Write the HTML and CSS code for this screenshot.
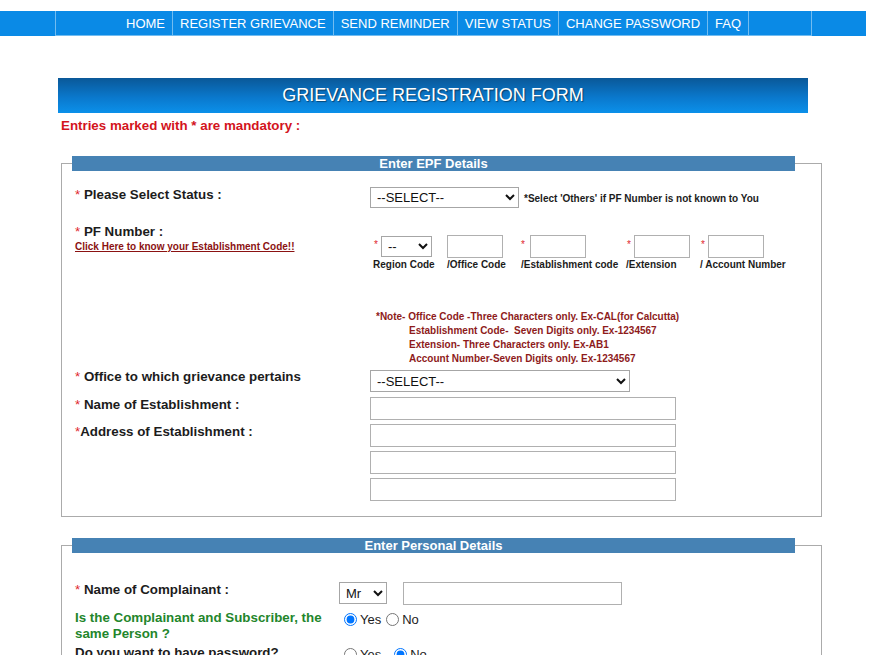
FILE: index.html
```html
<!DOCTYPE html>
<html lang="en">
<head>
<meta charset="utf-8">
<title>Grievance Registration Form</title>
<link rel="stylesheet" href="styles.css">
</head>
<body>
<div class="topbar">
  <ul class="menu">
    <li>HOME</li>
    <li>REGISTER GRIEVANCE</li>
    <li>SEND REMINDER</li>
    <li>VIEW STATUS</li>
    <li>CHANGE PASSWORD</li>
    <li>FAQ</li>
    <li class="empty"></li>
  </ul>
</div>

<div class="title">GRIEVANCE REGISTRATION FORM</div>
<p class="mandatory">Entries marked with * are mandatory :</p>

<fieldset class="fs fs-epf">
  <legend><span>Enter EPF Details</span></legend>

  <div class="row r-status">
    <div class="lbl"><span class="req">*</span> Please Select Status :</div>
    <div class="field">
      <select class="sel sel-status"><option>--SELECT--</option></select>
      <span class="hint">*Select 'Others' if PF Number is not known to You</span>
    </div>
  </div>

  <div class="row r-pf">
    <div class="lbl">
      <div><span class="req">*</span> PF Number :</div>
      <a class="estlink" href="#">Click Here to know your Establishment Code!!</a>
    </div>
    <div class="field">
      <div class="pf">
        <div class="pf-cell c1">
          <div class="pf-top"><span class="star">*</span><select class="sel sel-region"><option>--</option></select></div>
          <div class="pf-lbl">Region Code</div>
        </div>
        <div class="pf-cell c2">
          <div class="pf-top"><input class="txt txt-pf" type="text"></div>
          <div class="pf-lbl">/Office Code</div>
        </div>
        <div class="pf-cell c3">
          <div class="pf-top"><span class="star">*</span><input class="txt txt-pf" type="text"></div>
          <div class="pf-lbl">/Establishment code</div>
        </div>
        <div class="pf-cell c4">
          <div class="pf-top"><span class="star">*</span><input class="txt txt-pf" type="text"></div>
          <div class="pf-lbl">/Extension</div>
        </div>
        <div class="pf-cell c5">
          <div class="pf-top"><span class="star">*</span><input class="txt txt-pf" type="text"></div>
          <div class="pf-lbl">/ Account Number</div>
        </div>
      </div>
    </div>
  </div>

  <div class="note">
    <div>*Note- Office Code -Three Characters only. Ex-CAL(for Calcutta)</div>
    <div class="indent">Establishment Code-&nbsp;&nbsp;Seven Digits only. Ex-1234567</div>
    <div class="indent">Extension- Three Characters only. Ex-AB1</div>
    <div class="indent">Account Number-Seven Digits only. Ex-1234567</div>
  </div>

  <div class="row r-office">
    <div class="lbl"><span class="req">*</span> Office to which grievance pertains</div>
    <div class="field"><select class="sel sel-office"><option>--SELECT--</option></select></div>
  </div>

  <div class="row r-name">
    <div class="lbl"><span class="req">*</span> Name of Establishment :</div>
    <div class="field"><input class="txt txt-wide" type="text"></div>
  </div>

  <div class="row r-addr">
    <div class="lbl"><span class="req">*</span>Address of Establishment :</div>
    <div class="field stack">
      <input class="txt txt-wide" type="text">
      <input class="txt txt-wide" type="text">
      <input class="txt txt-wide" type="text">
    </div>
  </div>
</fieldset>

<fieldset class="fs fs-personal">
  <legend><span>Enter Personal Details</span></legend>

  <div class="row r-complainant">
    <div class="lbl"><span class="req">*</span> Name of Complainant :</div>
    <div class="field">
      <select class="sel sel-title"><option>Mr</option><option>Ms</option><option>Mrs</option></select>
      <input class="txt txt-cname" type="text">
    </div>
  </div>

  <div class="row r-same">
    <div class="lbl green">Is the Complainant and Subscriber, the same Person ?</div>
    <div class="field radios">
      <input type="radio" name="same" checked><span>Yes</span><input type="radio" name="same"><span>No</span>
    </div>
  </div>

  <div class="row r-pass">
    <div class="lbl">Do you want to have password?</div>
    <div class="field radios">
      <input type="radio" name="pw"><span>Yes</span><input class="gap" type="radio" name="pw" checked><span>No</span>
    </div>
  </div>
</fieldset>
</body>
</html>
```

FILE: styles.css
```css
html, body {
  margin: 0;
  padding: 0;
  background: #ffffff;
}

body {
  font-family: "Liberation Sans", Arial, sans-serif;
  color: #1c1c1c;
}

/* ---------- top menu ---------- */
.topbar {
  margin-top: 11px;
  width: 866px;
  height: 25px;
  background: #0a8ae6;
}

.menu {
  list-style: none;
  margin: 0 0 0 55px;
  padding: 0 0 0 63px;
  width: 757px;
  height: 25px;
  box-sizing: border-box;
  border-left: 1px solid #72bcf0;
  border-right: 1px solid #72bcf0;
  border-bottom: 1px solid #72bcf0;
  display: flex;
}

.menu li {
  padding: 0 7px;
  border-right: 1px solid #72bcf0;
  color: #ffffff;
  font-size: 13px;
  line-height: 25px;
  white-space: nowrap;
}

.menu li.empty {
  border-right: none;
}

/* ---------- heading ---------- */
.title {
  margin: 42px 0 0 58px;
  width: 750px;
  height: 35px;
  line-height: 35px;
  text-align: center;
  color: #ffffff;
  font-size: 18px;
  background: linear-gradient(to bottom, #0a5898 0%, #0a78cc 55%, #0b90ea 100%);
  text-shadow: 1px 1px 1px rgba(0, 0, 0, 0.45);
}

.mandatory {
  margin: 5px 0 0 61px;
  font-size: 13.33px;
  line-height: 15px;
  font-weight: bold;
  color: #d3141d;
}

/* ---------- fieldsets ---------- */
.fs {
  margin: 0 0 0 61px;
  width: 761px;
  box-sizing: border-box;
  border: 1px solid #ababab;
  padding: 0 10px 15px 10px;
}

.fs-epf {
  margin-top: 23px;
}

.fs-personal {
  margin-top: 21px;
}

.fs legend {
  width: 723px;
  height: 15px;
  padding: 0;
  box-sizing: border-box;
  background: #4682b4;
  text-align: left;
}

.fs legend span {
  display: block;
  text-align: center;
  color: #ffffff;
  font-size: 13px;
  font-weight: bold;
  line-height: 15px;
}

.row {
  display: flex;
  align-items: flex-start;
}

.lbl {
  width: 298px;
  padding-left: 3px;
  box-sizing: border-box;
  flex: none;
  font-size: 13.33px;
  font-weight: bold;
  line-height: 15px;
  color: #1c1c1c;
}

.fs-personal .lbl {
  width: 267px;
}

.req {
  color: #e0262e;
  font-weight: normal;
}

.field {
  display: flex;
  align-items: flex-start;
}

/* ---------- form controls ---------- */
.sel {
  box-sizing: border-box;
  font-family: "Liberation Sans", Arial, sans-serif;
  font-size: 13px;
  color: #111;
  border: 1px solid #a6a6a6;
  border-radius: 0;
  background-color: #ffffff;
  margin: 0;
  padding: 0 2px;
}

.txt {
  box-sizing: border-box;
  border: 1px solid #b0b0b0;
  border-radius: 0;
  margin: 0;
  padding: 0 3px;
  font-family: "Liberation Sans", Arial, sans-serif;
  font-size: 13px;
  background: #ffffff;
}

.sel-status {
  width: 149px;
  height: 21px;
}

.hint {
  margin: 6px 0 0 5px;
  font-size: 10px;
  font-weight: bold;
  line-height: 12px;
  color: #1c1c1c;
  white-space: nowrap;
}

/* ---------- rows of EPF ---------- */
.r-status {
  margin-top: 16px;
}

.r-pf {
  margin-top: 16px;
}

.estlink {
  display: block;
  margin-top: 1px;
  font-size: 10px;
  line-height: 13px;
  font-weight: bold;
  color: #8b1212;
  text-decoration: underline;
  white-space: nowrap;
}

.pf {
  display: flex;
  margin: 11px 0 0 3px;
}

.pf-cell {
  display: flex;
  flex-direction: column;
  flex: none;
}

.pf-cell.c1 { width: 74px; }
.pf-cell.c2 { width: 74px; }
.pf-cell.c3 { width: 105px; }
.pf-cell.c4 { width: 74px; }
.pf-cell.c5 { width: 90px; }

.pf-top {
  display: flex;
  align-items: flex-start;
  height: 23px;
}

.star {
  width: 8px;
  flex: none;
  padding-left: 1px;
  box-sizing: border-box;
  margin-top: 4px;
  font-size: 10px;
  line-height: 12px;
  color: #e0262e;
}

.c3 .star {
  width: 9px;
  padding-left: 0;
}

.sel-region {
  width: 51px;
  height: 21px;
  margin-top: 1px;
}

.txt-pf {
  width: 56px;
  height: 23px;
}

.pf-lbl {
  margin-top: 1px;
  font-size: 10px;
  font-weight: bold;
  line-height: 12px;
  color: #1c1c1c;
  white-space: nowrap;
}

.note {
  margin: 39px 0 0 304px;
  font-size: 10px;
  font-weight: bold;
  line-height: 14px;
  color: #8e1b1b;
  white-space: nowrap;
}

.note .indent {
  padding-left: 33px;
}

.r-office {
  margin-top: 3px;
}

.sel-office {
  width: 260px;
  height: 22px;
  margin-top: 1px;
}

.r-name {
  margin-top: 5px;
}

.r-addr {
  margin-top: 4px;
}

.txt-wide {
  width: 306px;
  height: 23px;
}

.stack {
  flex-direction: column;
  gap: 4px;
}

/* ---------- personal details ---------- */
.r-complainant {
  margin-top: 29px;
}

.sel-title {
  width: 48px;
  height: 22px;
}

.txt-cname {
  width: 219px;
  height: 23px;
  margin-left: 16px;
}

.r-same {
  margin-top: 5px;
}

.green {
  color: #23862b;
  line-height: 16px;
}

.radios {
  align-items: center;
  padding-top: 2px;
  font-size: 13px;
  color: #1c1c1c;
}

.radios input {
  width: 13px;
  height: 13px;
  margin: 0 3px 0 5px;
}

.radios input.gap {
  margin-left: 13px;
}

.r-pass {
  margin-top: 3px;
}
```
